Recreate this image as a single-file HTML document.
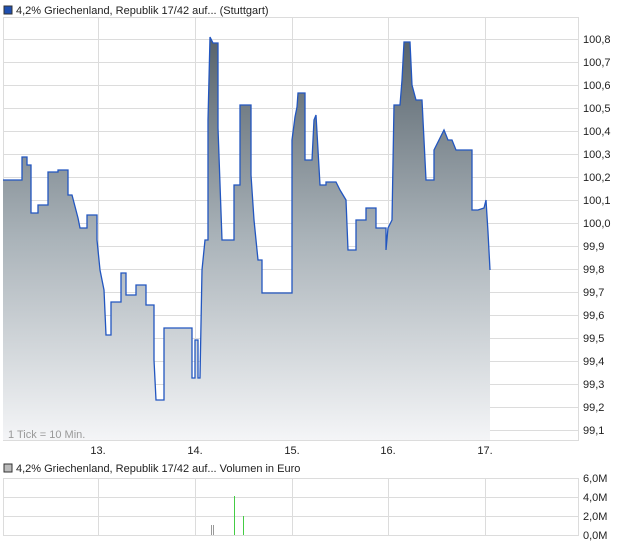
<!DOCTYPE html>
<html><head><meta charset="utf-8"><style>
body{margin:0;background:#fff;width:620px;height:546px;overflow:hidden;font-family:"Liberation Sans",sans-serif;}
svg text{font-family:"Liberation Sans",sans-serif;font-size:11px;fill:#222;}
</style></head><body>
<svg width="620" height="546" xmlns="http://www.w3.org/2000/svg">
<defs><linearGradient id="g" x1="0" y1="0" x2="0" y2="1" gradientUnits="userSpaceOnUse" x1a="0">
</linearGradient>
<linearGradient id="f" gradientUnits="userSpaceOnUse" x1="0" y1="37" x2="0" y2="440"><stop offset="0" stop-color="#56626b"/><stop offset="0.5" stop-color="#aab3b9"/><stop offset="1" stop-color="#f4f5f7"/></linearGradient></defs>
<rect x="4" y="6" width="8" height="8" fill="#1f4fb0" stroke="#333" stroke-width="1"/>
<text x="16" y="14">4,2% Griechenland, Republik 17/42 auf... (Stuttgart)</text>
<g stroke="#dcdcdc" stroke-width="1" fill="none">
<rect x="3.5" y="17.5" width="575" height="423"/>
<path d="M98.5 18V440M195.5 18V440M292.5 18V440M388.5 18V440M485.5 18V440"/>
<path d="M4 39.5H578M4 62.5H578M4 85.5H578M4 108.5H578M4 131.5H578M4 154.5H578M4 177.5H578M4 200.5H578M4 223.5H578M4 246.5H578M4 269.5H578M4 292.5H578M4 315.5H578M4 338.5H578M4 361.5H578M4 384.5H578M4 407.5H578M4 430.5H578"/>
</g>
<path id="p" d="M3,180 L22,180 L22,157 L27,157 L27,165 L31,165 L31,213 L38,213 L38,205 L48,205 L48,172 L58,172 L58,170 L68,170 L68,195 L72,195 L78,218 L80,228 L87,228 L87,215 L97,215 L97,240 L100,270 L104,290 L106,335 L111,335 L111,302 L121,302 L121,273 L126,273 L126,295 L136,295 L136,285 L146,285 L146,305 L154,305 L154,360 L156,400 L164,400 L164,328 L192,328 L192,378 L195,378 L195,340 L198,340 L198,378 L200,378 L202,270 L205,240 L208,240 L208,120 L210,37 L213,43 L218,43 L218,128 L222,240 L234,240 L234,185 L240,185 L240,105 L251,105 L251,175 L254,220 L258,260 L262,260 L262,293 L292,293 L292,140 L295,117 L297,107 L298,93 L305,93 L305,160 L312,160 L314,120 L316,115 L318,150 L320,185 L326,185 L326,182 L336,182 L340,190 L346,200 L348,250 L356,250 L356,220 L366,220 L366,208 L376,208 L376,228 L386,228 L386,250 L388,228 L392,220 L394,105 L400,105 L402,80 L404,42 L410,42 L412,85 L416,100 L422,100 L426,180 L434,180 L434,150 L444,130 L448,140 L452,140 L456,150 L472,150 L472,210 L478,210 L484,208 L486,200 L488,232 L490,270" fill="none"/>
<path d="M3,180 L22,180 L22,157 L27,157 L27,165 L31,165 L31,213 L38,213 L38,205 L48,205 L48,172 L58,172 L58,170 L68,170 L68,195 L72,195 L78,218 L80,228 L87,228 L87,215 L97,215 L97,240 L100,270 L104,290 L106,335 L111,335 L111,302 L121,302 L121,273 L126,273 L126,295 L136,295 L136,285 L146,285 L146,305 L154,305 L154,360 L156,400 L164,400 L164,328 L192,328 L192,378 L195,378 L195,340 L198,340 L198,378 L200,378 L202,270 L205,240 L208,240 L208,120 L210,37 L213,43 L218,43 L218,128 L222,240 L234,240 L234,185 L240,185 L240,105 L251,105 L251,175 L254,220 L258,260 L262,260 L262,293 L292,293 L292,140 L295,117 L297,107 L298,93 L305,93 L305,160 L312,160 L314,120 L316,115 L318,150 L320,185 L326,185 L326,182 L336,182 L340,190 L346,200 L348,250 L356,250 L356,220 L366,220 L366,208 L376,208 L376,228 L386,228 L386,250 L388,228 L392,220 L394,105 L400,105 L402,80 L404,42 L410,42 L412,85 L416,100 L422,100 L426,180 L434,180 L434,150 L444,130 L448,140 L452,140 L456,150 L472,150 L472,210 L478,210 L484,208 L486,200 L488,232 L490,270 L490,440 L3,440Z" fill="url(#f)"/>
<use href="#p" stroke="#2256c0" stroke-width="1.3"/>
<text x="8" y="438" style="fill:#999">1 Tick = 10 Min.</text>
<g text-anchor="start">
<text x="583" y="43">100,8</text><text x="583" y="66">100,7</text><text x="583" y="89">100,6</text><text x="583" y="112">100,5</text><text x="583" y="135">100,4</text><text x="583" y="158">100,3</text><text x="583" y="181">100,2</text><text x="583" y="204">100,1</text><text x="583" y="227">100,0</text><text x="583" y="250">99,9</text><text x="583" y="273">99,8</text><text x="583" y="296">99,7</text><text x="583" y="319">99,6</text><text x="583" y="342">99,5</text><text x="583" y="365">99,4</text><text x="583" y="388">99,3</text><text x="583" y="411">99,2</text><text x="583" y="434">99,1</text>
</g>
<g text-anchor="middle"><text x="98" y="454">13.</text><text x="195" y="454">14.</text><text x="292" y="454">15.</text><text x="388" y="454">16.</text><text x="485" y="454">17.</text></g>
<rect x="4" y="464" width="8" height="8" fill="#bbb" stroke="#333" stroke-width="1"/>
<text x="16" y="472">4,2% Griechenland, Republik 17/42 auf... Volumen in Euro</text>
<g stroke="#dcdcdc" stroke-width="1" fill="none">
<path d="M3.5 478V536M578.5 478V536M98.5 478V536M195.5 478V536M292.5 478V536M388.5 478V536M485.5 478V536"/>
<path d="M3 478.5H579M3 497.5H579M3 516.5H579M3 535.5H579"/>
</g>
<path d="M211.5 525V535M213.5 525V535" stroke="#999"/>
<path d="M234.5 496V535M243.5 516V535" stroke="#44cc44"/>
<g><text x="583" y="482">6,0M</text><text x="583" y="501">4,0M</text><text x="583" y="520">2,0M</text><text x="583" y="539">0,0M</text></g>
</svg>
</body></html>
